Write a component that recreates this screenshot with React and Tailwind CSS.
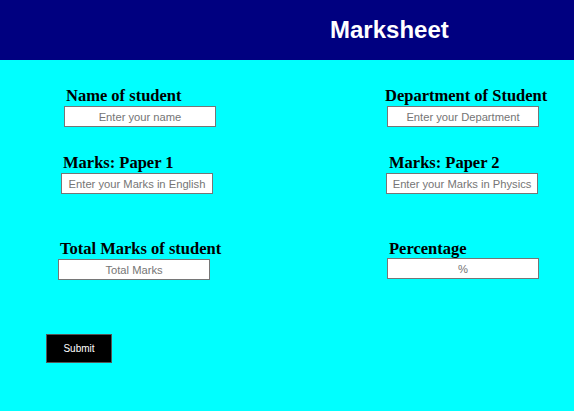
export default function App() {
  const label = "whitespace-nowrap font-bold text-black text-[16.5px] leading-[19px] [font-family:'Liberation_Serif',serif]";
  const input =
    "block w-[152px] h-[21px] border border-[#767676] bg-white text-center text-[11.2px] text-black placeholder:text-[#757575] outline-none [font-family:'Liberation_Sans',Arial,sans-serif]";
  return (
    <div className="min-h-screen bg-[#00ffff] [font-family:'Liberation_Sans',Arial,sans-serif]">
      <header className="h-[60px] bg-[#000080] pl-[330px]">
        <h1 className="text-[24px] font-bold leading-[60px] text-white">Marksheet</h1>
      </header>
      <main className="pt-[26px]">
        <div className="grid grid-cols-[287px_287px]">
          <div className="pl-[64px]">
            <div className={`${label} pl-[2px]`}>Name of student</div>
            <input className={`${input} mt-px`} placeholder="Enter your name" />
          </div>
          <div className="pl-[98px]">
            <div className={label}>Department of Student</div>
            <input className={`${input} mt-px ml-[2px]`} placeholder="Enter your Department" />
          </div>
        </div>
        <div className="mt-[26px] grid grid-cols-[287px_287px]">
          <div className="pl-[61px]">
            <div className={`${label} pl-[2px]`}>Marks: Paper 1</div>
            <input className={`${input} mt-px`} placeholder="Enter your Marks in English" />
          </div>
          <div className="pl-[99px]">
            <div className={`${label} pl-[3px]`}>Marks: Paper 2</div>
            <input className={`${input} mt-px`} placeholder="Enter your Marks in Physics" />
          </div>
        </div>
        <div className="mt-[45px] grid grid-cols-[287px_287px]">
          <div className="pl-[58px]">
            <div className={`${label} pl-[2px]`}>Total Marks of student</div>
            <input className={`${input} mt-px`} placeholder="Total Marks" />
          </div>
          <div className="pl-[100px]">
            <div className={`${label} pl-[2px]`}>Percentage</div>
            <input className={input} placeholder="%" />
          </div>
        </div>
        <div className="mt-[54px] pl-[46px]">
          <button className="h-[29px] w-[66px] border border-[#555555] bg-black text-[10px] text-white">
            Submit
          </button>
        </div>
      </main>
    </div>
  );
}
